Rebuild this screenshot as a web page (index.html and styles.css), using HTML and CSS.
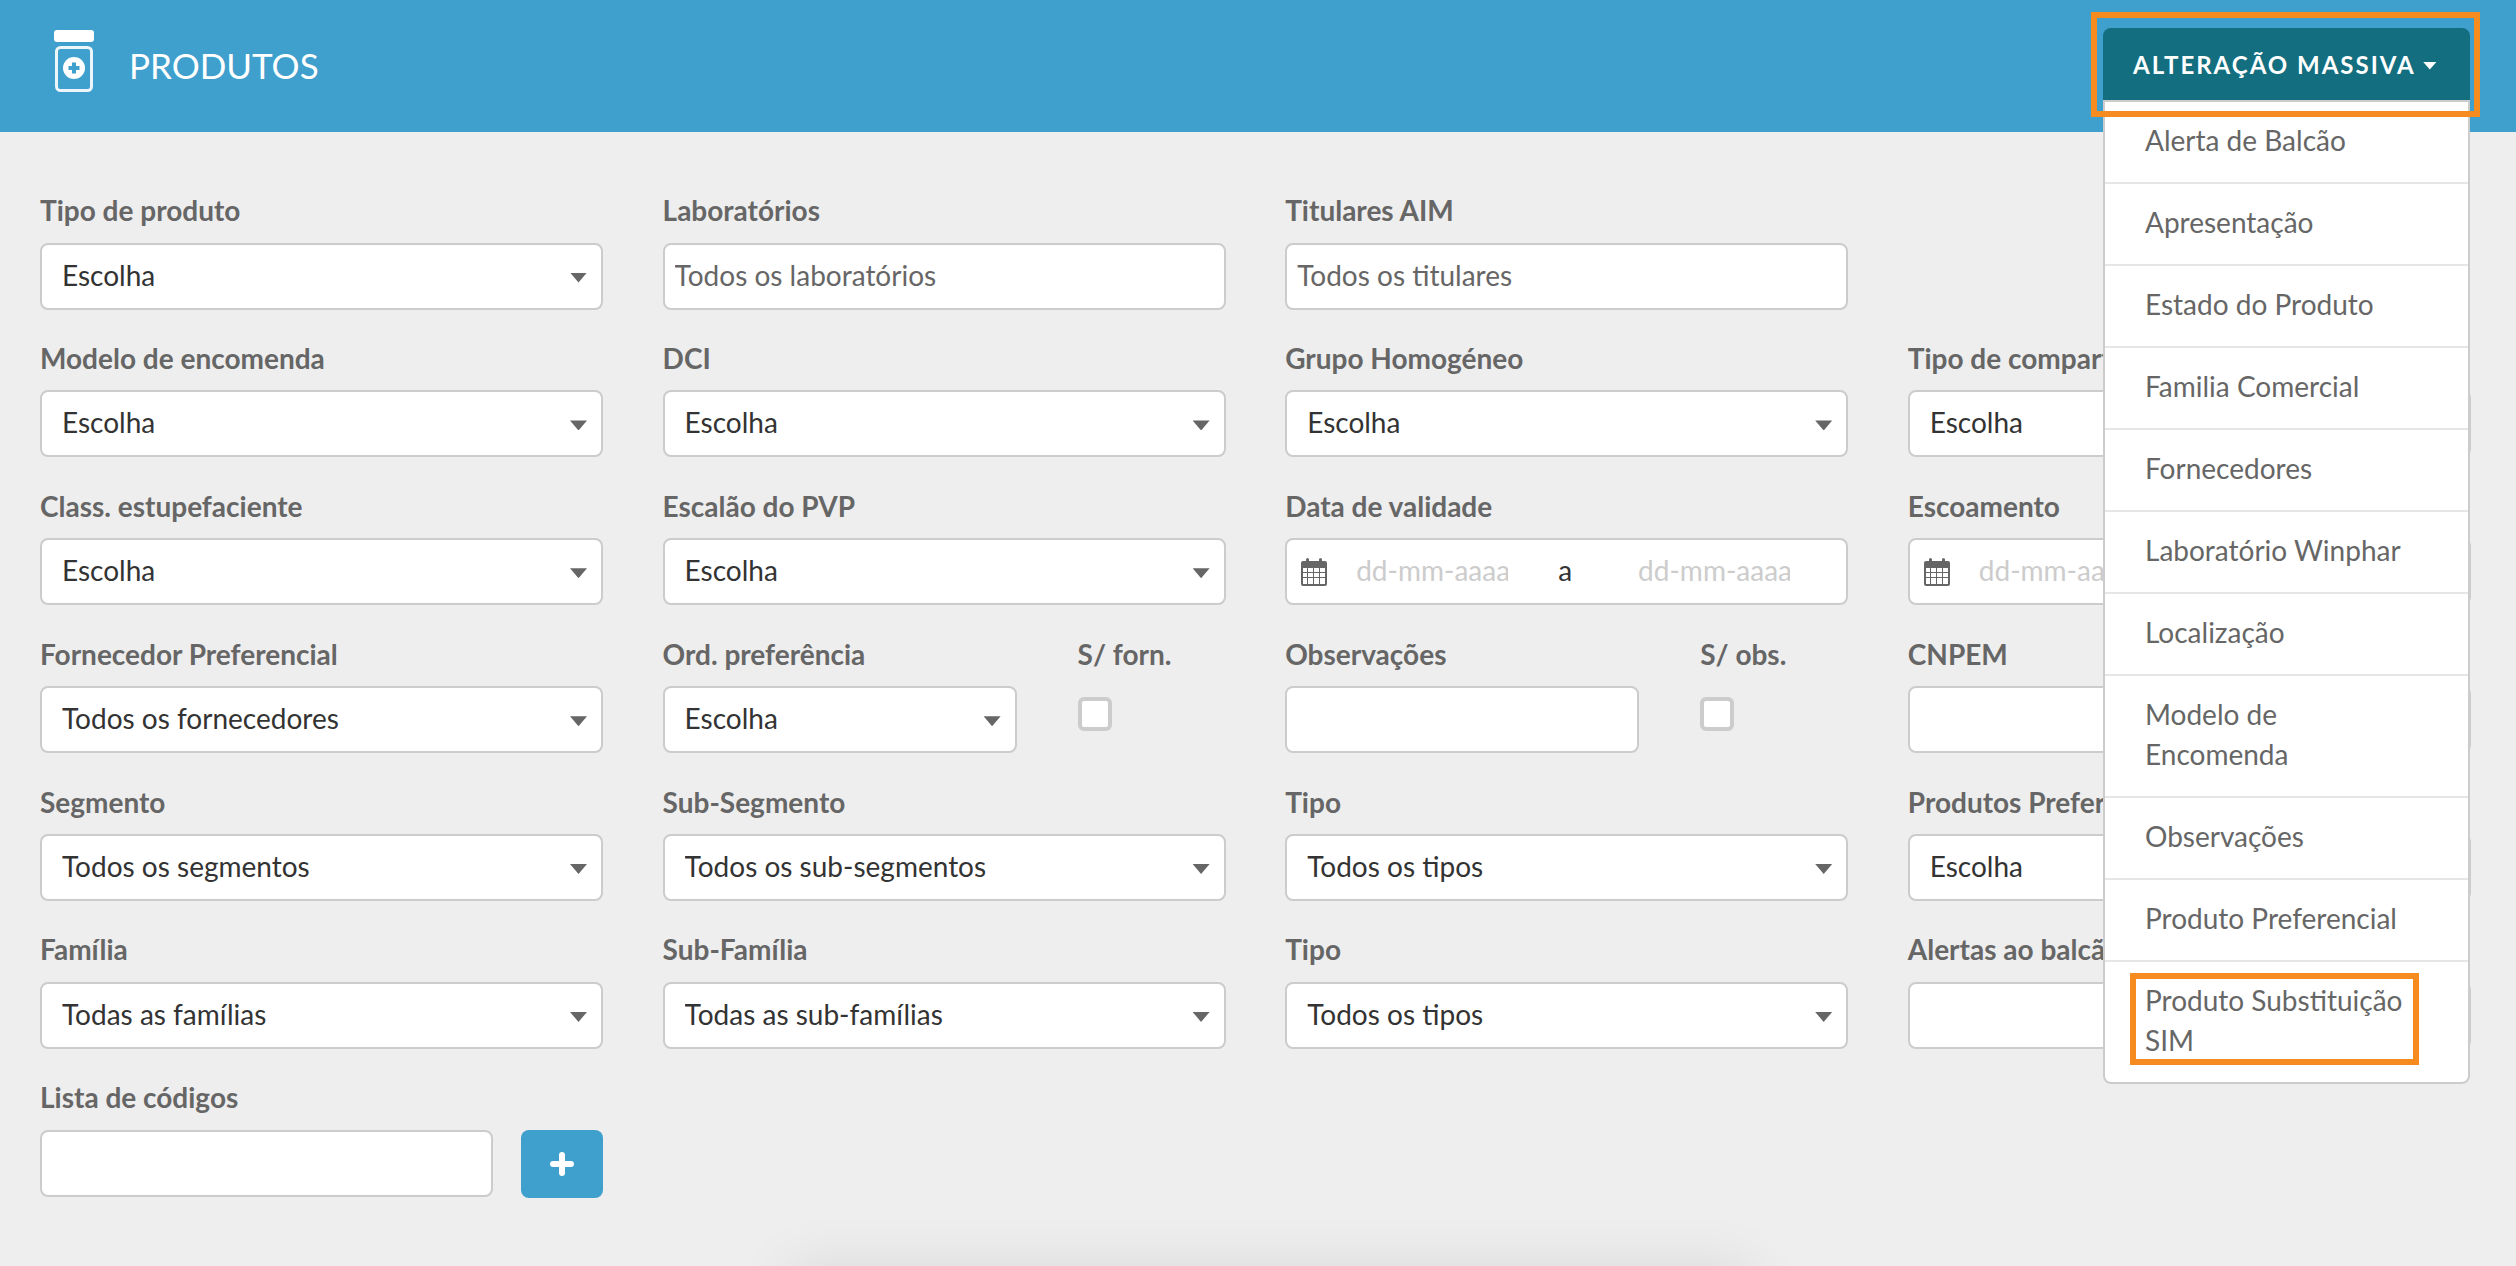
FILE: index.html
```html
<!DOCTYPE html>
<html lang="pt">
<head>
  <meta charset="UTF-8">
  <title>Produtos</title>
  <link rel="stylesheet" href="styles.css">
</head>
<body>

  <header class="top-bar">
    <div class="page-title">
      <svg class="bottle-icon" viewBox="0 0 42 64" width="42" height="64">
        <rect x="1" y="0" width="40" height="12" rx="3" fill="#fff"/>
        <rect x="3.500" y="17.500" width="35" height="43" rx="4" fill="none" stroke="#fff" stroke-width="3" opacity="0.9"/>
        <circle cx="21" cy="38" r="11" fill="#fff"/>
        <path d="M21 32.500v11M15.500 38h11" stroke="#3f9fcd" stroke-width="4"/>
      </svg>
      <span>PRODUTOS</span>
    </div>

    <div class="mass-edit">
      <button class="mass-edit-btn">ALTERAÇÃO MASSIVA <i class="caret"></i></button>
      <ul class="mass-edit-menu">
        <li>Alerta de Balcão</li>
        <li>Apresentação</li>
        <li>Estado do Produto</li>
        <li>Familia Comercial</li>
        <li>Fornecedores</li>
        <li>Laboratório Winphar</li>
        <li>Localização</li>
        <li>Modelo de Encomenda</li>
        <li>Observações</li>
        <li>Produto Preferencial</li>
        <li class="marked">Produto Substituição SIM</li>
      </ul>
      <div class="orange-box"></div>
    </div>
  </header>

  <main class="filters">
    <div class="field">
      <label>Tipo de produto</label>
      <div class="select"><select><option>Escolha</option></select></div>
    </div>
    <div class="field">
      <label>Laboratórios</label>
      <input class="text-input" type="text" placeholder="Todos os laboratórios">
    </div>
    <div class="field">
      <label>Titulares AIM</label>
      <input class="text-input" type="text" placeholder="Todos os titulares">
    </div>
    <div class="field"></div>

    <div class="field">
      <label>Modelo de encomenda</label>
      <div class="select"><select><option>Escolha</option></select></div>
    </div>
    <div class="field">
      <label>DCI</label>
      <div class="select"><select><option>Escolha</option></select></div>
    </div>
    <div class="field">
      <label>Grupo Homogéneo</label>
      <div class="select"><select><option>Escolha</option></select></div>
    </div>
    <div class="field">
      <label>Tipo de comparticipação</label>
      <div class="select"><select><option>Escolha</option></select></div>
    </div>

    <div class="field">
      <label>Class. estupefaciente</label>
      <div class="select"><select><option>Escolha</option></select></div>
    </div>
    <div class="field">
      <label>Escalão do PVP</label>
      <div class="select"><select><option>Escolha</option></select></div>
    </div>
    <div class="field">
      <label>Data de validade</label>
      <div class="date-range">
        <svg class="calendar-icon" viewBox="0 0 26 28" width="26" height="28">
          <path fill="#666" fill-rule="evenodd" d="M2 3h3V1.500a1.500 1.500 0 0 1 3 0V3h10V1.500a1.500 1.500 0 0 1 3 0V3h3a2 2 0 0 1 2 2v21a2 2 0 0 1-2 2H2a2 2 0 0 1-2-2V5a2 2 0 0 1 2-2zM2 10v4h4v-4zm5 0v4h5v-4zm6 0v4h5v-4zm6 0v4h5v-4zM2 15v4h4v-4zm5 0v4h5v-4zm6 0v4h5v-4zm6 0v4h5v-4zM2 20v6h4v-6zm5 0v6h5v-6zm6 0v6h5v-6zm6 0v6h5v-6z"/>
        </svg>
        <input class="date-input" type="text" placeholder="dd-mm-aaaa">
        <span class="date-sep">a</span>
        <input class="date-input" type="text" placeholder="dd-mm-aaaa">
      </div>
    </div>
    <div class="field">
      <label>Escoamento</label>
      <div class="date-range">
        <svg class="calendar-icon" viewBox="0 0 26 28" width="26" height="28">
          <path fill="#666" fill-rule="evenodd" d="M2 3h3V1.500a1.500 1.500 0 0 1 3 0V3h10V1.500a1.500 1.500 0 0 1 3 0V3h3a2 2 0 0 1 2 2v21a2 2 0 0 1-2 2H2a2 2 0 0 1-2-2V5a2 2 0 0 1 2-2zM2 10v4h4v-4zm5 0v4h5v-4zm6 0v4h5v-4zm6 0v4h5v-4zM2 15v4h4v-4zm5 0v4h5v-4zm6 0v4h5v-4zm6 0v4h5v-4zM2 20v6h4v-6zm5 0v6h5v-6zm6 0v6h5v-6zm6 0v6h5v-6z"/>
        </svg>
        <input class="date-input" type="text" placeholder="dd-mm-aaaa">
      </div>
    </div>

    <div class="field">
      <label>Fornecedor Preferencial</label>
      <div class="select"><select><option>Todos os fornecedores</option></select></div>
    </div>
    <div class="field-pair">
      <div class="field">
        <label>Ord. preferência</label>
        <div class="select"><select><option>Escolha</option></select></div>
      </div>
      <div class="field">
        <label>S/ forn.</label>
        <input class="check" type="checkbox">
      </div>
    </div>
    <div class="field-pair">
      <div class="field">
        <label>Observações</label>
        <input class="text-input" type="text">
      </div>
      <div class="field">
        <label>S/ obs.</label>
        <input class="check" type="checkbox">
      </div>
    </div>
    <div class="field">
      <label>CNPEM</label>
      <input class="text-input" type="text">
    </div>

    <div class="field">
      <label>Segmento</label>
      <div class="select"><select><option>Todos os segmentos</option></select></div>
    </div>
    <div class="field">
      <label>Sub-Segmento</label>
      <div class="select"><select><option>Todos os sub-segmentos</option></select></div>
    </div>
    <div class="field">
      <label>Tipo</label>
      <div class="select"><select><option>Todos os tipos</option></select></div>
    </div>
    <div class="field">
      <label>Produtos Preferenciais</label>
      <div class="select"><select><option>Escolha</option></select></div>
    </div>

    <div class="field">
      <label>Família</label>
      <div class="select"><select><option>Todas as famílias</option></select></div>
    </div>
    <div class="field">
      <label>Sub-Família</label>
      <div class="select"><select><option>Todas as sub-famílias</option></select></div>
    </div>
    <div class="field">
      <label>Tipo</label>
      <div class="select"><select><option>Todos os tipos</option></select></div>
    </div>
    <div class="field">
      <label>Alertas ao balcão</label>
      <input class="text-input" type="text">
    </div>

    <div class="field">
      <label>Lista de códigos</label>
      <div class="code-row">
        <input class="text-input" type="text">
        <button class="add-btn">
          <svg viewBox="0 0 24 24" width="24" height="24"><path d="M12 3v18M3 12h18" stroke="#fff" stroke-width="6" stroke-linecap="round"/></svg>
        </button>
      </div>
    </div>
  </main>

  <div class="bottom-shadow"></div>

</body>
</html>
```

FILE: styles.css
```css
*, *::after {
  box-sizing: border-box;
}

html, body {
  height: 1266px;
}

body {
  margin: 0;
  position: relative;
  overflow: hidden;
  background: #eee;
  font-family: 'Lato', sans-serif;
  font-size: 28px;
  color: #666;
}

.top-bar {
  height: 132px;
  background-color: #3f9fcd;
  padding: 0 46px 0 53px;
  display: flex;
  justify-content: space-between;
}

.page-title {
  display: flex;
  align-items: center;
  gap: 34px;
  height: 132px;
  color: #fff;
  font-size: 35px;
}

.page-title span {
  margin-top: -3px;
}

.bottle-icon {
  margin-top: -8px;
}

.mass-edit {
  position: relative;
  width: 367px;
  margin-top: 28px;
  z-index: 10;
}

.mass-edit-btn {
  display: block;
  width: 100%;
  height: 72px;
  padding: 0 0 0 30px;
  border: none;
  border-radius: 8px 8px 0 0;
  background-color: #136e80;
  color: #fff;
  font-family: inherit;
  font-size: 24px;
  font-weight: 700;
  letter-spacing: 2px;
  text-align: left;
}

.caret {
  display: inline-block;
  width: 14px;
  height: 8px;
  vertical-align: 4px;
  background: #fff;
  clip-path: polygon(0 0, 100% 0, 50% 100%);
}

.mass-edit-menu {
  list-style: none;
  margin: 0;
  padding: 0;
  background: #fff;
  border: 2px solid #ccc;
  border-radius: 0 0 8px 8px;
}

.mass-edit-menu li {
  position: relative;
  padding: 18px 60px 22px 40px;
  line-height: 40px;
  border-bottom: 2px solid #e6e6e6;
}

.mass-edit-menu li:last-child {
  border-bottom: none;
}

/* orange marks from the annotated screenshot */
.orange-box {
  position: absolute;
  top: -16px;
  left: -12px;
  width: 389px;
  height: 105px;
  border: 6px solid #f68b1f;
  pointer-events: none;
}

.mass-edit-menu .marked::after {
  content: '';
  position: absolute;
  top: 11px;
  left: 25px;
  width: 289px;
  height: 92px;
  border: 6px solid #f68b1f;
}

.filters {
  display: grid;
  grid-template-columns: repeat(4, 563px);
  column-gap: 59.6px;
  row-gap: 28.4px;
  padding: 58px 0 0 40px;
}

.field label {
  display: block;
  height: 40px;
  line-height: 40px;
  margin-bottom: 12.5px;
  font-weight: 700;
  white-space: nowrap;
}

.field-pair {
  display: grid;
  grid-template-columns: 354px 148px;
  column-gap: 61px;
}

.select {
  position: relative;
}

.select::after {
  content: '';
  position: absolute;
  top: 30px;
  right: 16px;
  width: 17px;
  height: 10px;
  background: #666;
  clip-path: polygon(0 0, 100% 0, 50% 100%);
}

.select select {
  width: 100%;
  height: 67px;
  padding: 0 20px 3px;
  appearance: none;
  background: #fff;
  border: 2px solid #ccc;
  border-radius: 8px;
  font-family: inherit;
  font-size: 28px;
  color: #333;
}

.text-input {
  display: block;
  width: 100%;
  height: 67px;
  padding: 0 10px 3px;
  background: #fff;
  border: 2px solid #ccc;
  border-radius: 8px;
  font-family: inherit;
  font-size: 28px;
  color: #333;
}

.text-input::placeholder {
  color: #666;
  opacity: 1;
}

.date-range {
  display: flex;
  align-items: center;
  height: 67px;
  padding-left: 14px;
  background: #fff;
  border: 2px solid #ccc;
  border-radius: 8px;
  color: #333;
  overflow: hidden;
}

.calendar-icon {
  flex: none;
  margin-right: 29px;
}

.date-input {
  width: 152px;
  padding: 0 0 3px;
  border: none;
  outline: none;
  font-family: inherit;
  font-size: 28px;
}

.date-input::placeholder {
  color: #ccc;
  opacity: 1;
}

.date-sep {
  margin: 0 66px 3px 50px;
}

.check {
  display: block;
  appearance: none;
  width: 34px;
  height: 34px;
  margin: 23px 0 0;
  background: #fff;
  border: 4px solid #ccc;
  border-radius: 6px;
}

.code-row {
  display: flex;
  gap: 28px;
}

.code-row .text-input {
  width: 453px;
}

.add-btn {
  display: flex;
  align-items: center;
  justify-content: center;
  width: 82px;
  height: 68px;
  padding: 0;
  border: none;
  border-radius: 8px;
  background-color: #3f9fcd;
}

/* soft shadow of something just below the fold */
.bottom-shadow {
  position: absolute;
  top: 1166px;
  left: 640px;
  width: 1260px;
  height: 100px;
  overflow: hidden;
}

.bottom-shadow::after {
  content: '';
  position: absolute;
  top: 124px;
  left: 170px;
  width: 920px;
  height: 60px;
  box-shadow: 0 0 60px 20px rgba(0,0,0,0.1);
}
```
